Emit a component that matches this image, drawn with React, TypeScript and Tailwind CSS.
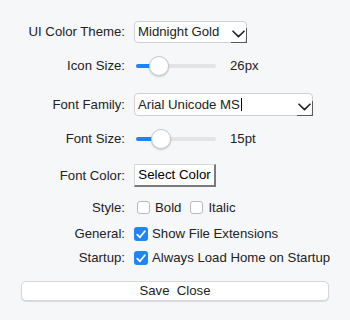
import React from "react";

const Chevron = () => (
  <svg width="13" height="8" viewBox="0 0 13 8" className="block">
    <path d="M1 1.2 L6.5 6.6 L12 1.2" fill="none" stroke="#222" strokeWidth="1.6" strokeLinecap="round" strokeLinejoin="round" />
  </svg>
);

const Label = ({ children }: { children: React.ReactNode }) => (
  <div className="w-[125px] shrink-0 text-right">{children}</div>
);

const Slider = ({ thumb, value }: { thumb: number; value: string }) => (
  <div className="flex items-center">
    <div className="relative w-[82px] h-[22px]">
      <div className="absolute left-[2px] top-[9px] w-[80px] h-[4px] rounded-full bg-[#e4e4e6]" />
      <div className="absolute left-[2px] top-[9px] h-[4px] rounded-full bg-[#1a84fb]" style={{ width: thumb - 134 - 2 + 4 }} />
      <div
        className="absolute top-[1px] w-[20px] h-[20px] rounded-full bg-white border border-[#c9c9cc] shadow-[0_1px_2px_rgba(0,0,0,0.2)]"
        style={{ left: thumb - 134 }}
      />
    </div>
    <span className="ml-[14px]">{value}</span>
  </div>
);

const Check = () => (
  <div className="w-[14px] h-[14px] rounded-[3px] bg-[#1f84f8] flex items-center justify-center">
    <svg width="10" height="9" viewBox="0 0 10 9">
      <path d="M1.3 4.6 L3.9 7.3 L8.8 1.2" fill="none" stroke="white" strokeWidth="1.8" strokeLinecap="round" strokeLinejoin="round" />
    </svg>
  </div>
);

const Box = () => (
  <div className="w-[13px] h-[13px] rounded-[3px] bg-white border border-[#b9b9bd]" />
);

export default function App() {
  return (
    <div
      className="w-[350px] h-[320px] bg-[#f6f7f9] text-[#222] text-[13.2px] leading-none pt-[21px]"
      style={{ fontFamily: '"Liberation Sans", Arial, sans-serif' }}
    >
      <div className="flex items-center h-[22px]">
        <Label>UI Color Theme:</Label>
        <div className="ml-[9px] relative w-[113px] h-[22px] bg-white border border-[#cfcfd2] rounded-[4px] flex items-center pl-[3px]">
          <span>Midnight Gold</span>
          <div className="absolute right-[1px] top-[8px]">
            <Chevron />
          </div>
          <div className="absolute right-[-1px] bottom-[-1px] w-[16px] h-[15px] border-r border-b border-[#5a5a5a]" />
        </div>
      </div>

      <div className="flex items-center h-[22px] mt-[12px]">
        <Label>Icon Size:</Label>
        <div className="ml-[9px]">
          <Slider thumb={149} value="26px" />
        </div>
      </div>

      <div className="flex items-center h-[23px] mt-[16px]">
        <Label>Font Family:</Label>
        <div className="ml-[9px] relative w-[179px] h-[23px] bg-white border border-[#cfcfd2] rounded-[4px] flex items-center pl-[3px]">
          <span>Arial Unicode MS</span>
          <span className="w-px h-[13px] bg-black ml-[1px]" />
          <div className="absolute right-[1px] top-[9px]">
            <Chevron />
          </div>
          <div className="absolute right-[-1px] bottom-[-1px] w-[16px] h-[15px] border-r border-b border-[#5a5a5a]" />
        </div>
      </div>

      <div className="flex items-center h-[22px] mt-[12px]">
        <Label>Font Size:</Label>
        <div className="ml-[9px]">
          <Slider thumb={151} value="15pt" />
        </div>
      </div>

      <div className="flex items-center h-[23px] mt-[14px]">
        <Label>Font Color:</Label>
        <div className="ml-[9px] w-[82px] h-[23px] bg-white border-l border-t border-[#d8d8d8] border-r-2 border-b-2 border-r-[#7a7a7a] border-b-[#7a7a7a] flex items-center justify-center text-[13.3px] text-black">
          Select Color
        </div>
      </div>

      <div className="flex items-center h-[18px] mt-[12px]">
        <Label>Style:</Label>
        <div className="ml-[12px] flex items-center">
          <Box />
          <span className="ml-[5px]">Bold</span>
          <div className="ml-[9px]">
            <Box />
          </div>
          <span className="ml-[5px]">Italic</span>
        </div>
      </div>

      <div className="flex items-center h-[18px] mt-[8px]">
        <Label>General:</Label>
        <div className="ml-[9px] flex items-center">
          <Check />
          <span className="ml-[4px]">Show File Extensions</span>
        </div>
      </div>

      <div className="flex items-center h-[18px] mt-[6px]">
        <Label>Startup:</Label>
        <div className="ml-[9px] flex items-center">
          <Check />
          <span className="ml-[4px]">Always Load Home on Startup</span>
        </div>
      </div>

      <div className="mt-[14px] mx-[21px] h-[20px] bg-white border border-[#d6d6d9] rounded-[5px] shadow-[0_1px_1px_rgba(0,0,0,0.12)] flex items-center justify-center whitespace-pre">
        Save  Close
      </div>
    </div>
  );
}
